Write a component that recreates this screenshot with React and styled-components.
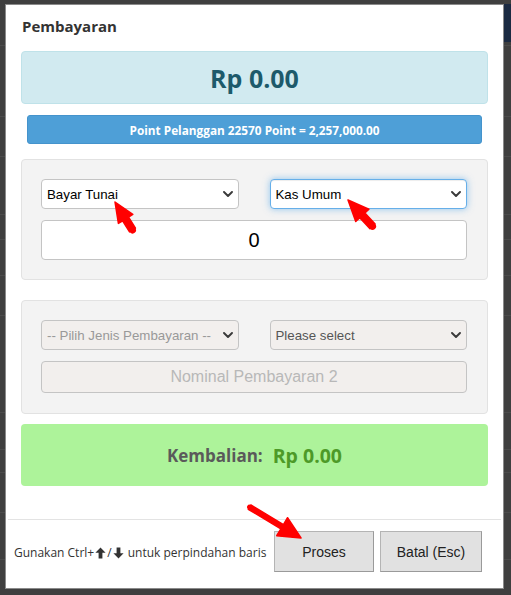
import React from 'react';
import styled, { createGlobalStyle } from 'styled-components';

const Global = createGlobalStyle`
  html, body { margin: 0; padding: 0; }
  body {
    background: #3f3f3f;
    width: 511px;
    height: 595px;
    overflow: hidden;
    font-family: "Open Sans", "Liberation Sans", sans-serif;
  }
`;

const Stage = styled.div`
  position: relative;
  width: 511px;
  height: 595px;
  overflow: hidden;
  background: #3f3f3f;
`;

/* page behind the dimmed overlay */
const Backdrop = styled.div`
  display: flex;
  flex-direction: column;
`;

const BackRow = styled.div`
  height: ${(p) => p.$h}px;
  border-bottom: 1px solid #4b4b4b;
  box-sizing: border-box;
  display: flex;
  justify-content: flex-end;
  align-items: center;
`;

const BackButton = styled.div`
  width: 70px;
  height: 38px;
  background: #1b2a42;
  margin-right: -60px;
`;

const Modal = styled.div`
  position: absolute;
  top: 4px;
  left: 5px;
  width: 499px;
  box-sizing: border-box;
  background: #fff;
  border: 1px solid #8a8a8a;
  display: flex;
  flex-direction: column;
`;

const Header = styled.div`
  padding: 11px 15px 0 16px;
`;

const Title = styled.h4`
  margin: 0;
  font-size: 15px;
  line-height: 20px;
  font-weight: 700;
  color: #333;
`;

const Body = styled.div`
  padding: 15px 15px 0 15px;
  display: flex;
  flex-direction: column;
`;

const TotalBox = styled.div`
  height: 53px;
  box-sizing: border-box;
  background: #d1eaf0;
  border: 1px solid #bfe2e9;
  border-radius: 4px;
  display: flex;
  align-items: center;
  justify-content: center;
  font-size: 25px;
  font-weight: 700;
  color: #1d5a6b;
`;

const PointBar = styled.div`
  margin: 11px 6px 0 6px;
  height: 29px;
  box-sizing: border-box;
  background: #4e9fd7;
  border: 1px solid #4493cc;
  border-radius: 3px;
  display: flex;
  align-items: center;
  justify-content: center;
  color: #fff;
  font-size: 11.8px;
  font-weight: 700;
`;

const Panel = styled.div`
  margin-top: ${(p) => p.$mt}px;
  background: #f3f3f3;
  border: 1px solid #e2e2e2;
  border-radius: 4px;
  padding: 19px 20px ${(p) => p.$pb}px 19px;
  display: flex;
  flex-direction: column;
  gap: 11px;
`;

const SelectRow = styled.div`
  display: grid;
  grid-template-columns: minmax(0, 1fr) minmax(0, 1fr);
  column-gap: 31px;
`;

const SelectWrap = styled.div`
  position: relative;
  display: flex;
`;

const Select = styled.select`
  appearance: none;
  -webkit-appearance: none;
  width: 100%;
  height: 30px;
  box-sizing: border-box;
  padding: 0 18px 0 5px;
  font-family: "Liberation Sans", Arial, sans-serif;
  font-size: 13.3px;
  color: ${(p) => p.$color || '#000'};
  background: ${(p) => (p.$muted ? '#f2efed' : '#fff')};
  border: 1px solid ${(p) => (p.$focus ? '#66afe9' : '#c4c4c4')};
  border-radius: 4px;
  box-shadow: ${(p) =>
    p.$focus ? 'inset 0 1px 1px rgba(0,0,0,.075), 0 0 7px rgba(102,175,233,.7)' : 'none'};
  outline: none;
`;

const Chevron = styled.svg`
  position: absolute;
  right: 6px;
  top: 50%;
  margin-top: -3px;
  width: 10px;
  height: 6px;
  pointer-events: none;
`;

function Dropdown({ children, ...rest }) {
  return (
    <SelectWrap>
      <Select {...rest}>{children}</Select>
      <Chevron viewBox="0 0 10 6">
        <path d="M1 1 L5 5 L9 1" fill="none" stroke="#3a3a3a" strokeWidth="1.9" strokeLinecap="round" strokeLinejoin="round" />
      </Chevron>
    </SelectWrap>
  );
}

const AmountInput = styled.input`
  height: ${(p) => p.$h}px;
  box-sizing: border-box;
  width: 100%;
  text-align: center;
  font-family: "Liberation Sans", Arial, sans-serif;
  font-size: ${(p) => p.$fs}px;
  color: #000;
  background: ${(p) => (p.$muted ? '#f2efed' : '#fff')};
  border: 1px solid #c4c4c4;
  border-radius: 4px;
  outline: none;
  &::placeholder { color: #b8b8b8; }
`;

const ChangeBox = styled.div`
  margin-top: 10px;
  height: 62px;
  box-sizing: border-box;
  background: #adf39a;
  border-radius: 4px;
  display: flex;
  align-items: center;
  justify-content: center;
  gap: 10px;
  font-weight: 700;
`;

const ChangeLabel = styled.span`
  font-size: 17px;
  color: #5a5a5a;
`;

const ChangeValue = styled.span`
  font-size: 19.5px;
  color: #4d9a28;
`;

const Footer = styled.div`
  margin: 33px 2px 0 2px;
  border-top: 1px solid #e3e3e3;
  padding: 11px 19px 16px 6px;
  display: flex;
  align-items: center;
`;

const Hint = styled.span`
  font-size: 12px;
  color: #333;
  display: flex;
  align-items: center;
  white-space: nowrap;
  margin-top: 2px;
`;

const KeyArrow = styled.svg`
  width: 11px;
  height: 12px;
  margin: 0 1px;
  transform: ${(p) => (p.$down ? 'rotate(180deg)' : 'none')};
`;

function HeavyArrow({ down }) {
  return (
    <KeyArrow viewBox="0 0 11 12" $down={down}>
      <path d="M5.5 0.5 L10.6 5.8 L7.4 5.8 L7.4 11.5 L3.6 11.5 L3.6 5.8 L0.4 5.8 Z" fill="#333" strokeLinejoin="round" />
    </KeyArrow>
  );
}

const Buttons = styled.div`
  margin-left: auto;
  display: flex;
  gap: 6px;
`;

const Button = styled.button`
  width: ${(p) => p.$w}px;
  height: 41px;
  box-sizing: border-box;
  background: #e1e1e1;
  border: 1px solid #b4b4b4;
  border-right-color: #9a9a9a;
  border-bottom-color: #9a9a9a;
  font-family: "Liberation Sans", Arial, sans-serif;
  font-size: 14px;
  color: #222;
`;

const Annotations = styled.svg`
  position: absolute;
  inset: 0;
  pointer-events: none;
`;

function Arrow({ x, y, angle, length, head, headW, shaft }) {
  const pts = [
    [0, 0],
    [head, -headW / 2],
    [head, -shaft / 2],
    [length, -shaft / 2],
    [length, shaft / 2],
    [head, shaft / 2],
    [head, headW / 2],
  ]
    .map((p) => p.join(','))
    .join(' ');
  return (
    <g transform={`translate(${x} ${y}) rotate(${angle})`}>
      <polygon points={pts} fill="#f00" stroke="#f00" strokeWidth="1.5" strokeLinejoin="round" />
      <circle cx={length} cy={0} r={shaft / 2} fill="#f00" />
    </g>
  );
}

export default function App() {
  return (
    <Stage>
      <Global />
      <Backdrop>
        <BackRow $h={46}><BackButton /></BackRow>
        <BackRow $h={71} />
        <BackRow $h={40} />
        <BackRow $h={58} />
        <BackRow $h={25} />
        <BackRow $h={36} />
        <BackRow $h={40} />
        <BackRow $h={97} />
        <BackRow $h={37} />
        <BackRow $h={23} />
        <BackRow $h={40} />
        <BackRow $h={47} />
      </Backdrop>

      <Modal>
        <Header>
          <Title>Pembayaran</Title>
        </Header>
        <Body>
          <TotalBox>Rp 0.00</TotalBox>
          <PointBar>Point Pelanggan 22570 Point = 2,257,000.00</PointBar>

          <Panel $mt={15} $pb={19}>
            <SelectRow>
              <Dropdown defaultValue="tunai">
                <option value="tunai">Bayar Tunai</option>
              </Dropdown>
              <Dropdown defaultValue="kas" $focus>
                <option value="kas">Kas Umum</option>
              </Dropdown>
            </SelectRow>
            <AmountInput $h={40} $fs={20} defaultValue="0" />
          </Panel>

          <Panel $mt={20} $pb={20}>
            <SelectRow>
              <Dropdown $muted $color="#999" defaultValue="">
                <option value="">-- Pilih Jenis Pembayaran --</option>
              </Dropdown>
              <Dropdown $muted $color="#555" defaultValue="">
                <option value="">Please select</option>
              </Dropdown>
            </SelectRow>
            <AmountInput $h={32} $fs={16} $muted placeholder="Nominal Pembayaran 2" />
          </Panel>

          <ChangeBox>
            <ChangeLabel>Kembalian:</ChangeLabel>
            <ChangeValue>Rp 0.00</ChangeValue>
          </ChangeBox>
        </Body>
        <Footer>
          <Hint>
            Gunakan Ctrl+<HeavyArrow />/<HeavyArrow down />&nbsp;untuk perpindahan baris
          </Hint>
          <Buttons>
            <Button $w={100}>Proses</Button>
            <Button $w={102}>Batal (Esc)</Button>
          </Buttons>
        </Footer>
      </Modal>

      <Annotations width="511" height="595" viewBox="0 0 511 595">
        <Arrow x={115} y={202} angle={58} length={33} head={20} headW={17} shaft={7} />
        <Arrow x={348} y={200} angle={47} length={36} head={21} headW={18} shaft={7} />
        <Arrow x={301} y={538} angle={211} length={60} head={22} headW={21} shaft={5} />
      </Annotations>
    </Stage>
  );
}
